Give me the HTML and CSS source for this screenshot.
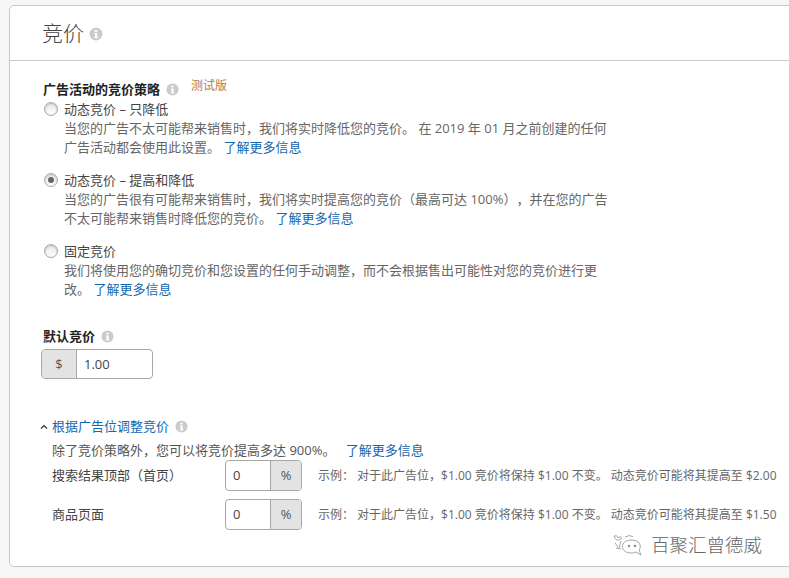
FILE: index.html
```html
<!DOCTYPE html>
<html lang="zh">
<head>
<meta charset="utf-8">
<title>竞价</title>
<link rel="stylesheet" href="styles.css">
</head>
<body>
<svg class="defs" width="0" height="0" aria-hidden="true"><defs>
<symbol id="info" viewBox="0 0 14 14"><circle cx="7" cy="7" r="6.5" fill="#c9cccc"/><rect x="6" y="6" width="2.2" height="5" fill="#fff"/><rect x="5.2" y="6" width="2" height="1" fill="#fff"/><rect x="5.2" y="10.2" width="3.8" height="1" fill="#fff"/><circle cx="7" cy="3.9" r="1.25" fill="#fff"/></symbol>
</defs></svg>
<main class="card">
  <header class="card-head">
    <h1 class="title">竞价</h1>
    <svg class="info info-lg"><use href="#info"/></svg>
  </header>
  <div class="card-body">
    <div class="label-row">
      <span class="label">广告活动的竞价策略</span>
      <svg class="info"><use href="#info"/></svg>
      <span class="beta">测试版</span>
    </div>
    <div class="option">
      <span class="radio"></span>
      <div class="option-text">
        <div class="option-title">动态竞价 – 只降低</div>
        <p class="desc">当您的广告不太可能帮来销售时，我们将实时降低您的竞价。 在 2019 年 01 月之前创建的任何<br>广告活动都会使用此设置。 <a class="link" href="#">了解更多信息</a></p>
      </div>
    </div>
    <div class="option">
      <span class="radio checked"></span>
      <div class="option-text">
        <div class="option-title">动态竞价 – 提高和降低</div>
        <p class="desc">当您的广告很有可能帮来销售时，我们将实时提高您的竞价（最高可达 100%），并在您的广告<br>不太可能帮来销售时降低您的竞价。 <a class="link" href="#">了解更多信息</a></p>
      </div>
    </div>
    <div class="option">
      <span class="radio"></span>
      <div class="option-text">
        <div class="option-title">固定竞价</div>
        <p class="desc">我们将使用您的确切竞价和您设置的任何手动调整，而不会根据售出可能性对您的竞价进行更<br>改。 <a class="link" href="#">了解更多信息</a></p>
      </div>
    </div>
    <div class="label-row default-label">
      <span class="label">默认竞价</span>
      <svg class="info"><use href="#info"/></svg>
    </div>
    <div class="input-group money">
      <span class="addon addon-left">$</span>
      <span class="value">1.00</span>
    </div>
    <div class="collapse-row">
      <svg class="chevron" viewBox="0 0 8 6"><path d="M1 4.5 L4 1.5 L7 4.5" fill="none" stroke="#333" stroke-width="1.2"/></svg>
      <a class="link" href="#">根据广告位调整竞价</a>
      <svg class="info"><use href="#info"/></svg>
    </div>
    <div class="placement">
      <p class="placement-intro">除了竞价策略外，您可以将竞价提高多达 900%。 <a class="link intro-link" href="#">了解更多信息</a></p>
      <div class="placement-row">
        <span class="placement-name">搜索结果顶部（首页）</span>
        <div class="input-group percent">
          <span class="value">0</span>
          <span class="addon addon-right">%</span>
        </div>
        <span class="example">示例： 对于此广告位，$1.00 竞价将保持 $1.00 不变。 动态竞价可能将其提高至 $2.00</span>
      </div>
      <div class="placement-row">
        <span class="placement-name">商品页面</span>
        <div class="input-group percent">
          <span class="value">0</span>
          <span class="addon addon-right">%</span>
        </div>
        <span class="example">示例： 对于此广告位，$1.00 竞价将保持 $1.00 不变。 动态竞价可能将其提高至 $1.50</span>
      </div>
    </div>
  </div>
  <div class="watermark">
    <svg class="wechat" viewBox="0 0 30 22" fill="none" stroke="#8f8f8f" stroke-width="0.8">
      <path d="M1 2 Q4 0.5 5.5 4 Q7 1 8.5 4.5 Q5 7 3.5 6 Q2 5 1 2Z"/>
      <path d="M2 9 L5 13 M8 7 L6 14 M3 14 L8 15"/>
      <path d="M18 6 C11 6 8 11 10 15 C12 19 18 20 23 18 L28 21 L26 16 C29 12 27 6 18 6Z"/>
      <circle cx="16" cy="12" r="0.9" fill="#666"/>
      <circle cx="22" cy="12" r="0.9" fill="#666"/>
      <path d="M12 3 Q16 0.5 20 2.5"/>
    </svg>
    <span class="wm-text">百聚汇曾德威</span>
  </div>
</main>
</body>
</html>
```
FILE: styles.css
```css
* { box-sizing: border-box; }
html, body { margin: 0; height: 100%; overflow: hidden; }
body {
  background: #f6f6f6;
  color: #333;
  font: 13px/19px "Open Sans", "Noto Sans CJK SC", sans-serif;
  padding: 5px 0 0 9px;
  width: 789px;
  text-spacing-trim: space-all;
}
.defs { position: absolute; }
p { margin: 0; }
.link { color: #1567ad; text-decoration: none; }
.card {
  position: relative;
  width: 800px;
  height: 562px;
  background: #fff;
  border: 1px solid #c8c9c9;
  border-radius: 5px;
}
.card-head {
  height: 55px;
  border-bottom: 1px solid #c8c9c9;
  display: flex;
  align-items: center;
  padding: 0 0 0 32px;
  gap: 5px;
}
.title { margin: 0; font-size: 21px; line-height: 30px; font-weight: 300; color: #444; }
.info { width: 13px; height: 13px; flex: none; }
.info-lg { width: 14px; height: 14px; margin-top: 2px; }
.card-body { padding: 19px 0 0 33px; }
.label-row { display: flex; align-items: center; gap: 6px; }
.label { font-weight: 700; color: #222; }
.beta { font-size: 12px; color: #b87a45; margin: -8px 0 0 6px; }
.option { display: flex; gap: 6px; margin-top: 14px; color: #666; }
.label-row + .option { margin-top: 1px; }
.radio {
  width: 14px;
  height: 14px;
  margin: 2px 0 0 1px;
  flex: none;
  border-radius: 50%;
  border: 1px solid #a9abab;
  background: linear-gradient(#e8e8e8, #fdfdfd);
  box-shadow: inset 0 1px 2px #bbb;
  display: flex;
  align-items: center;
  justify-content: center;
}
.radio.checked::after { content: ""; width: 6px; height: 6px; border-radius: 50%; background: #666; }
.option-title { color: #444; }
.desc { white-space: nowrap; }
.default-label { margin-top: 28px; }
.input-group {
  display: flex;
  align-items: stretch;
  background: #fff;
  border: 1px solid #a6a8a8;
  border-radius: 4px;
  overflow: hidden;
  color: #444;
  flex: none;
}
.money { width: 112px; height: 30px; margin: 3px 0 0 -2px; }
.percent { width: 77px; height: 31px; }
.addon {
  display: flex;
  align-items: center;
  justify-content: center;
  background: #e3e3e3;
  color: #555;
}
.addon-left { width: 35px; border-right: 1px solid #a6a8a8; }
.addon-right { width: 31px; border-left: 1px solid #a6a8a8; margin-left: auto; }
.value { display: flex; align-items: center; padding: 0 7px; }
.collapse-row { display: flex; align-items: center; margin: 38px 0 0 -3px; gap: 4px; }
.collapse-row .info { margin-left: 2px; }
.chevron { width: 8px; height: 6px; }
.placement { padding-left: 9px; color: #555; }
.placement-intro { margin-top: 5px; }
.intro-link { margin-left: 7px; }
.placement-row { display: flex; align-items: center; margin-bottom: 8px; }
.placement-name { width: 173px; color: #444; }
.example { margin-left: 16px; font-size: 12px; color: #666; white-space: nowrap; }
.watermark {
  position: absolute;
  left: 603px;
  top: 526px;
  display: flex;
  align-items: center;
  gap: 8px;
}
.wechat { width: 30px; height: 22px; }
.wm-text { font-size: 18.5px; line-height: 26px; font-weight: 300; color: #666; }
```
